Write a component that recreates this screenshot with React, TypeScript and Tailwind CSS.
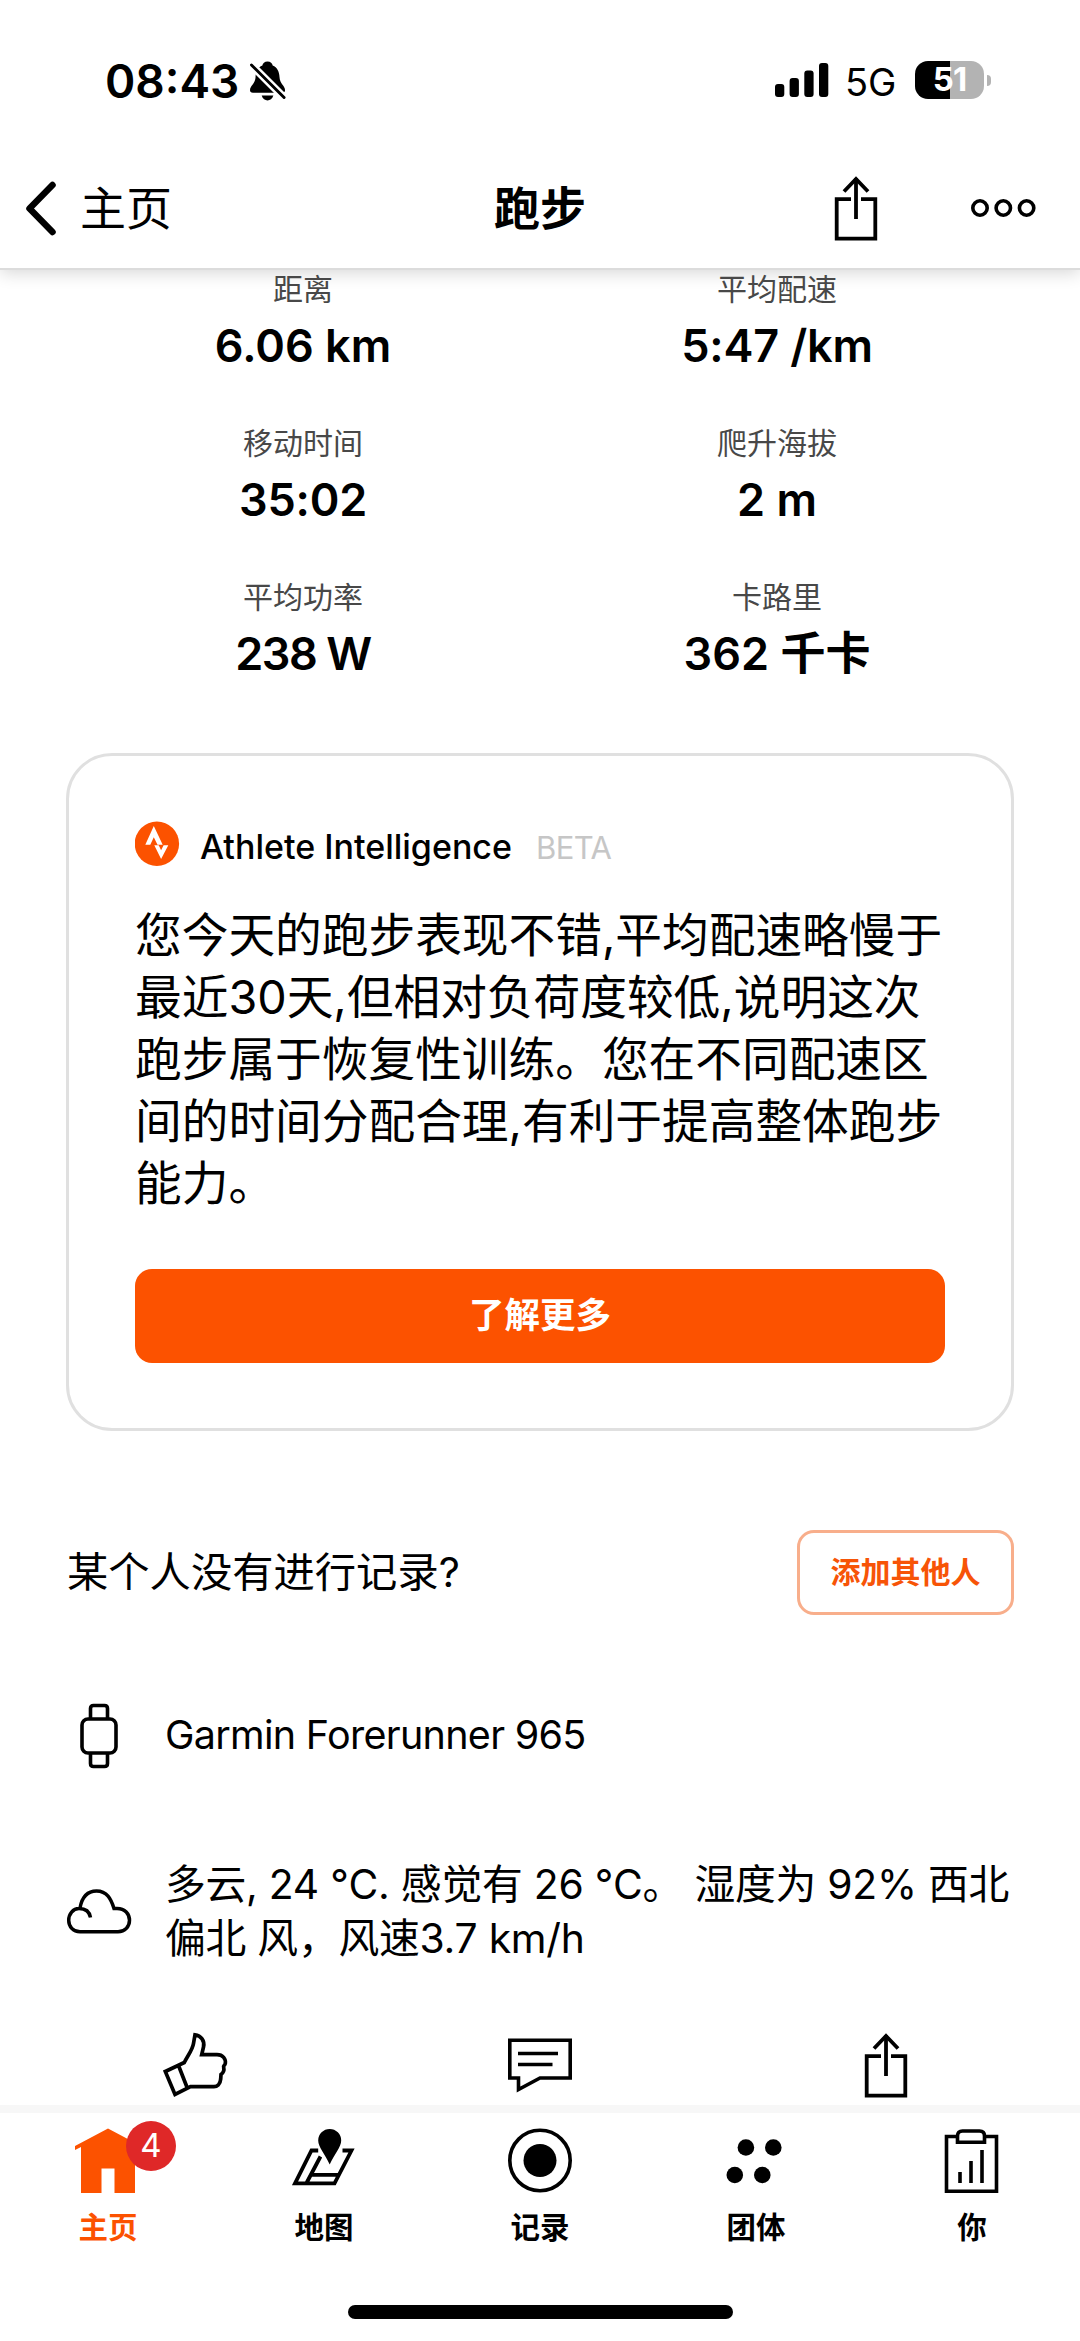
import React from "react";

const FONT = "font-['Inter','Noto_Sans_CJK_SC',sans-serif]";

function ShareIcon() {
  return (
    <svg width="44" height="66" viewBox="0 0 44 66" fill="none" stroke="#000" strokeWidth="3.8">
      <path d="M17 24.200H2.700V63.600H41.300V24.200H27" />
      <path d="M22 3v41" />
      <path d="M10 16.500 22 4l12 12.500" />
    </svg>
  );
}

function StatusBar() {
  return (
    <div className="relative z-20 flex h-[160px] items-start bg-white">
      <div className="ml-[105px] mt-[53px] h-[56px] w-[145px] text-[46px] leading-[56px] font-semibold whitespace-nowrap">08:43</div>
      <svg className="mt-[61px]" width="37" height="40" viewBox="0 0 38 40">
        <path d="M18 0c-3 0-5 2-5.300 4C8 6 6 10 5.700 16c-.2 7-5.700 9-5.700 13.500C0 31 1 32 3 32h30c2 0 3-1 3-2.500 0-4.500-5.500-6.500-5.700-13.500C30 10 28 6 23.300 4 23 2 21 0 18 0Z" />
        <path d="M12 35h12c-1 3.500-3.500 5-6 5s-5-1.500-6-5Z" />
        <path d="M-3 -1 39 41" stroke="#fff" strokeWidth="8" />
        <path d="M1.500 3.500 35 37" stroke="#000" strokeWidth="3" strokeLinecap="round" />
      </svg>
      <svg className="ml-[488px] mt-[63px]" width="54" height="35" viewBox="0 0 54 35">
        <rect x="0" y="21" width="9.300" height="13" rx="3" />
        <rect x="14.600" y="15" width="9.300" height="19" rx="3" />
        <rect x="29.300" y="7.500" width="9.300" height="26.500" rx="3" />
        <rect x="44" y="0" width="9.300" height="34" rx="3" />
      </svg>
      <div className="ml-[16px] mt-[58px] w-[70px] text-[38px] leading-[48px]">5G</div>
      <div className="mt-[61px] flex h-[38px] w-[69px] items-center justify-center rounded-[13px] bg-[linear-gradient(90deg,#000_51%,#b3b3b3_51%)] text-[33px] font-bold tracking-[-1px] text-white">51</div>
      <div className="ml-[3px] mt-[75px] h-[11px] w-[4px] rounded-r-full bg-[#b3b3b3]" />
    </div>
  );
}

function NavBar() {
  return (
    <header className="flex h-[110px] items-center border-b-2 border-[#dcdcdc] bg-white pb-[13px] shadow-[0_3px_16px_rgba(0,0,0,0.16)]">
      <svg className="ml-[25px] shrink-0" width="34" height="56" viewBox="0 0 34 56" fill="none" stroke="#000" strokeWidth="6.500" strokeLinecap="round" strokeLinejoin="round">
        <path d="M27.500 5 4.500 28.500 27.500 52" />
      </svg>
      <div className="ml-[21px] w-[414px] text-[46px] leading-[60px]">主页</div>
      <div className="w-[92px] text-[46px] leading-[60px] font-bold">跑步</div>
      <div className="ml-[248px]"><ShareIcon /></div>
      <svg className="ml-[92px]" width="68" height="20" viewBox="0 0 68 20" fill="none" stroke="#000" strokeWidth="3.600">
        <circle cx="10" cy="10" r="7.200" />
        <circle cx="33.300" cy="10" r="7.200" />
        <circle cx="56.600" cy="10" r="7.200" />
      </svg>
    </header>
  );
}

const stats = [
  { label: "距离", value: "6.06 km", spacing: "tracking-[0px]" },
  { label: "平均配速", value: "5:47 /km", spacing: "tracking-[-0.2px]" },
  { label: "移动时间", value: "35:02", spacing: "tracking-[-0.2px]" },
  { label: "爬升海拔", value: "2 m", spacing: "tracking-[0px]" },
  { label: "平均功率", value: "238 W", spacing: "tracking-[-1.4px]" },
  { label: "卡路里", value: "362 千卡", spacing: "tracking-[0px]" },
];

function Stats() {
  return (
    <section className="grid h-[483px] auto-rows-[154px] grid-cols-2 px-[66px] text-center">
      {stats.map(({ label, value, spacing }) => (
        <div key={label}>
          <div className="h-[38px] text-[30px] leading-[38px] text-[#484848]">{label}</div>
          <div className={`mt-[8px] h-[60px] text-[45px] leading-[60px] font-semibold ${spacing}`}>{value}</div>
        </div>
      ))}
    </section>
  );
}

function StravaLogo() {
  return (
    <svg width="45" height="46" viewBox="0 0 45 46">
      <circle cx="21.900" cy="22.700" r="22.200" fill="#fc5200" />
      <path d="M10.300 23.800 18.800 5 27.700 23.800H22.500L18.800 16.300 15.300 23.800Z" fill="#fff" />
      <path d="M19.300 24.300h4.400l2.400 4.900 2.500-4.900h4.700l-7.200 13.600Z" fill="#fff" />
    </svg>
  );
}

const summary = [
  "您今天的跑步表现不错,平均配速略慢于",
  "最近30天,但相对负荷度较低,说明这次",
  "跑步属于恢复性训练。您在不同配速区",
  "间的时间分配合理,有利于提高整体跑步",
  "能力。",
];

function IntelligenceCard() {
  return (
    <section className="mx-[66px] h-[678px] rounded-[46px] border-[3px] border-[#e0e0e0] px-[66px] pt-[65px]">
      <div className="flex h-[46px] items-center">
        <StravaLogo />
        <div className="ml-[20px] mt-[5px] w-[336px] text-[34px] font-medium whitespace-nowrap">Athlete Intelligence</div>
        <div className="mt-[9px] text-[31px] tracking-[-0.6px] text-[#c6c6c6]">BETA</div>
      </div>
      <div className="mt-[37px] text-[46.700px] leading-[62px] whitespace-nowrap">
        {summary.map((line) => (
          <div key={line}>{line}</div>
        ))}
      </div>
      <button className="mt-[55px] block h-[94px] w-[810px] rounded-[17px] bg-[#fc5200] text-[35.500px] font-bold text-white">了解更多</button>
    </section>
  );
}

function AddOthers() {
  return (
    <section className="mt-[99px] flex h-[85px] items-center justify-between px-[66px]">
      <div className="ml-[1px] text-[41.300px]">某个人没有进行记录?</div>
      <button className="h-[85px] w-[217px] rounded-[17px] border-[3px] border-[#f8ae8b] text-[30px] font-bold text-[#f75407]">添加其他人</button>
    </section>
  );
}

function Details() {
  return (
    <section className="px-[66px]">
      <div className="mt-[88px] flex h-[66px] items-center">
        <svg width="66" height="66" viewBox="0 0 66 66" fill="none" stroke="#000" strokeWidth="3.600">
          <rect x="16" y="16" width="34" height="34" rx="6" />
          <path d="M24.500 16V5.500q0-3 3-3h11q3 0 3 3V16M24.500 50v10.500q0 3 3 3h11q3 0 3-3V50" />
        </svg>
        <div className="ml-[33px] text-[39.500px] tracking-[-0.7px] whitespace-nowrap">Garmin Forerunner 965</div>
      </div>
      <div className="mt-[87px] flex h-[110px] items-center">
        <svg className="shrink-0" width="66" height="46" viewBox="0 0 66 46" fill="none" stroke="#000" strokeWidth="3.500">
          <path d="M14 20C16 9 22 3 30.500 3 41 3 45 11 48 20.500h3C59 20.500 63.500 26 63.500 32.300S59 43.700 52 43.700H14C7 43.700 2.700 38.500 2.700 32.300S7 20.500 13 20.500c6 0 10.500 3 11.500 9" />
        </svg>
        <div className="ml-[33px] text-[40.800px] leading-[54px] tracking-[-0.24px] whitespace-nowrap">
          <div>多云, 24 °C. 感觉有 26 °C。 湿度为 92% 西北</div>
          <div>偏北 风，风速3.7 km/h</div>
        </div>
      </div>
    </section>
  );
}

function Actions() {
  return (
    <section className="mt-[66px] flex h-[81px] items-start border-b-[8px] border-[#f7f7f7]">
      <svg className="ml-[162px]" width="66" height="66" viewBox="0 0 66 66" fill="none" stroke="#000" strokeWidth="3.700">
        <path d="M3.300 39.500 22.300 30.500C26 23 30.500 18 31.500 11.500L33 2.800C39 3.500 43 9 41.500 15L39.700 22.600H55C61 22.600 64 27 63.300 31.500 62.500 34 61 33.500 61.700 35.500 62.500 39 61 41 59 42.500L58.700 47C58.200 52.500 55 54.700 52 54.700H28.500L13 62.500ZM16.500 33.500 25.300 56" />
      </svg>
      <svg className="ml-[279px] mt-[6px]" width="66" height="56" viewBox="0 0 66 56" fill="none" stroke="#000" strokeWidth="3.600">
        <path d="M2.800 2.300H63.200V40H33L11.500 51.500V40H2.800ZM11 15.500H51M11 26.500H45.500" />
      </svg>
      <div className="ml-[291px]"><ShareIcon /></div>
    </section>
  );
}

function HomeIcon() {
  return (
    <svg width="66" height="66" viewBox="0 0 66 66" fill="#fc5200">
      <path d="M33 0.500 66 18v4L60 19v46H39.500V40.500H26.500V65H6V19L0 22v-4Z" />
    </svg>
  );
}

function MapIcon() {
  return (
    <svg width="66" height="66" viewBox="0 0 66 66" fill="none" stroke="#000" strokeWidth="3.800">
      <path d="M27.200 22.500H20.500L4 55.300H43.500L60.500 22.500H51.500M15.500 55 29.500 28.500M21 46.800H48" />
      <path d="M38.700 36.500C34 26 27.200 19 27.200 12.500a11.500 11.500 0 0 1 23 0C50.200 19 43.500 26 38.700 36.500Z" fill="#000" stroke="none" />
    </svg>
  );
}

function RecordIcon() {
  return (
    <svg width="66" height="66" viewBox="0 0 66 66">
      <circle cx="33" cy="32.500" r="30.200" fill="none" stroke="#000" strokeWidth="3.600" />
      <circle cx="33" cy="32.500" r="16.500" />
    </svg>
  );
}

function GroupIcon() {
  return (
    <svg width="66" height="66" viewBox="0 0 66 66">
      <circle cx="22.900" cy="19.500" r="8.300" />
      <circle cx="50.300" cy="19.500" r="8.300" />
      <circle cx="11.800" cy="47" r="8.300" />
      <circle cx="39.300" cy="47" r="8.300" />
    </svg>
  );
}

function YouIcon() {
  return (
    <svg width="66" height="66" viewBox="0 0 66 66" fill="none" stroke="#000" strokeWidth="3.600">
      <path d="M18 8.500H7.500V63.200H57.500V8.500H47" />
      <path d="M18.500 14.300V8q0-5 5-5H40.500q5 0 5 5v6.300Z" />
      <path d="M21 44v11M32 33v22M43 22v33" />
    </svg>
  );
}

const tabs = [
  { label: "主页", icon: <HomeIcon />, active: true, badge: "4" },
  { label: "地图", icon: <MapIcon /> },
  { label: "记录", icon: <RecordIcon /> },
  { label: "团体", icon: <GroupIcon /> },
  { label: "你", icon: <YouIcon /> },
];

function TabBar() {
  return (
    <nav className="grid h-[192px] grid-cols-5 pt-[15px]">
      {tabs.map((tab) => (
        <div key={tab.label} className="flex flex-col items-center">
          <div className="relative h-[66px] w-[66px]">
            {tab.icon}
            {tab.badge && (
              <span className="absolute -top-[7px] left-[51px] flex h-[50px] w-[50px] items-center justify-center rounded-full bg-[#df2828] text-[33px] text-white">{tab.badge}</span>
            )}
          </div>
          <div className={tab.active ? "mt-[13px] text-[29.500px] leading-[40px] font-bold text-[#fc5200]" : "mt-[13px] text-[29.500px] leading-[40px] font-bold"}>{tab.label}</div>
        </div>
      ))}
    </nav>
  );
}

export default function App() {
  return (
    <div lang="zh-CN" className={`h-[2341px] w-[1080px] overflow-hidden bg-white text-black ${FONT}`}>
      <StatusBar />
      <NavBar />
      <Stats />
      <IntelligenceCard />
      <AddOthers />
      <Details />
      <Actions />
      <TabBar />
      <div className="mx-auto h-[14px] w-[385px] rounded-full bg-black" />
    </div>
  );
}
